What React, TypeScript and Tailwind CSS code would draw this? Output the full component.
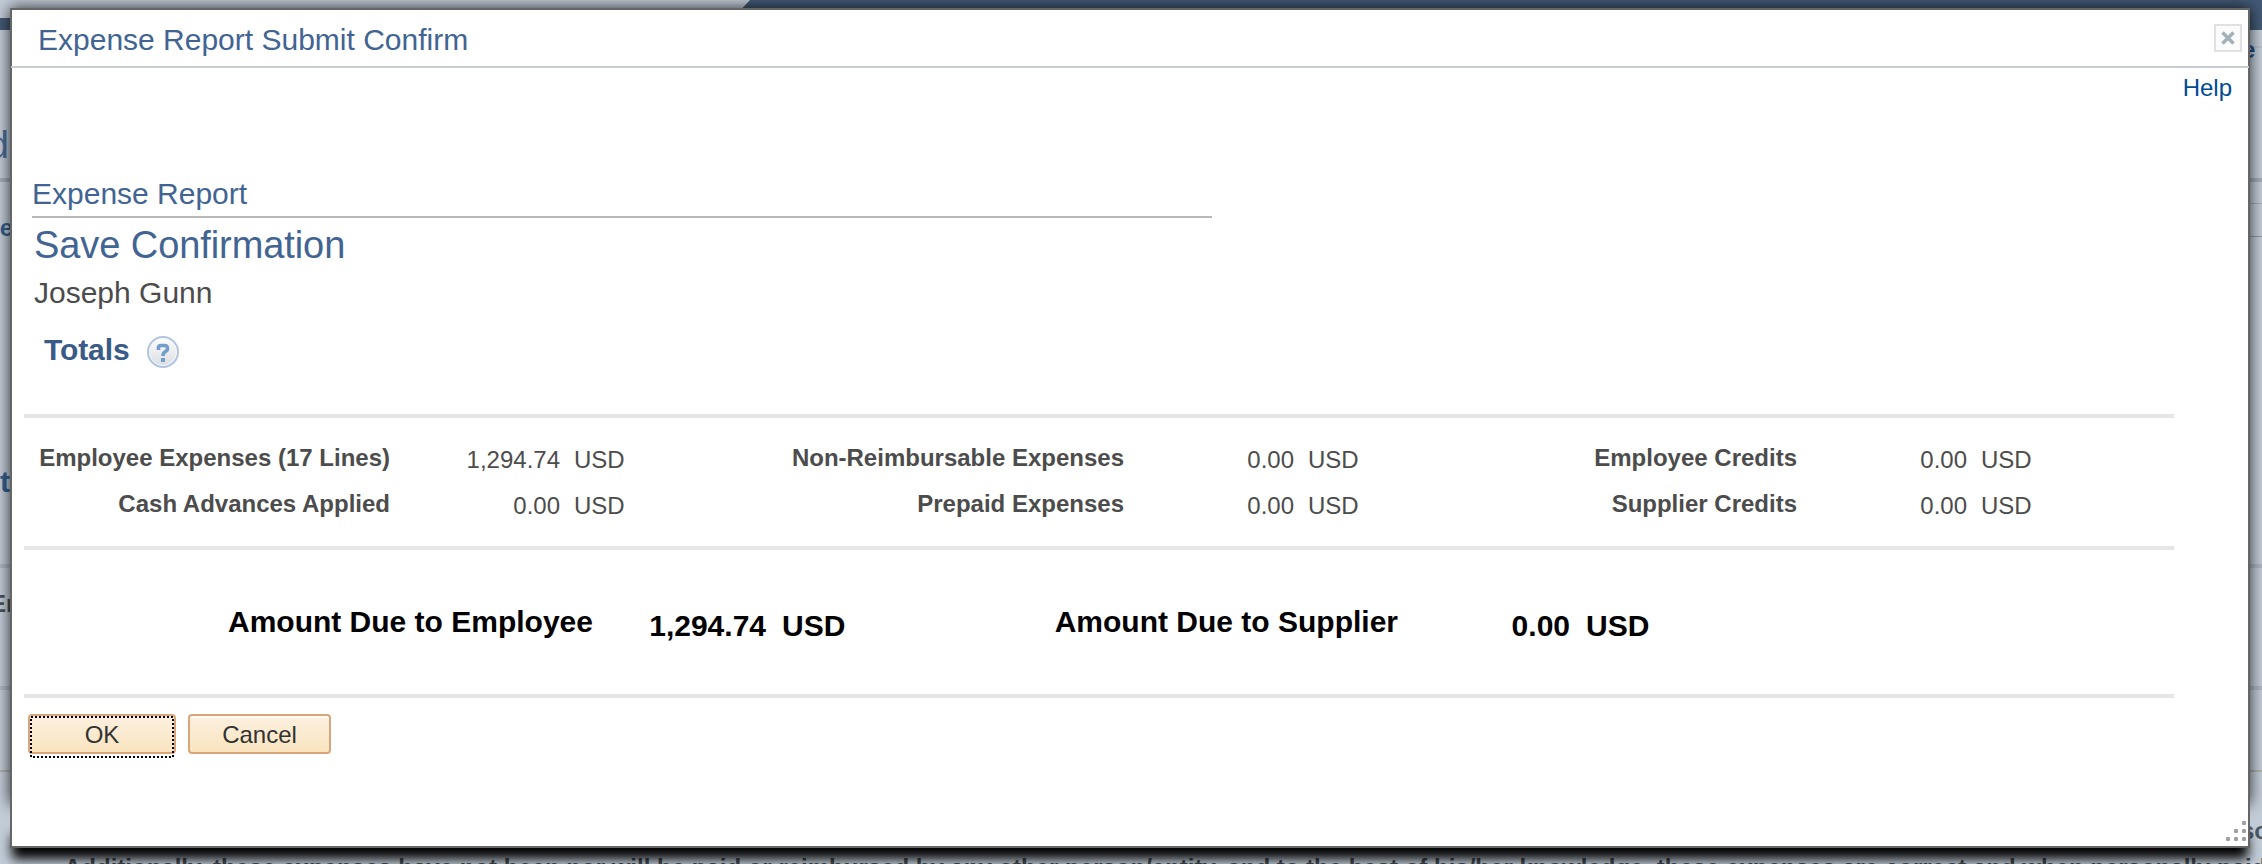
import React from "react";

type Item = { label: string; amount: string };

const rows: Item[][] = [
  [
    { label: "Employee Expenses (17 Lines)", amount: "1,294.74" },
    { label: "Non-Reimbursable Expenses", amount: "0.00" },
    { label: "Employee Credits", amount: "0.00" },
  ],
  [
    { label: "Cash Advances Applied", amount: "0.00" },
    { label: "Prepaid Expenses", amount: "0.00" },
    { label: "Supplier Credits", amount: "0.00" },
  ],
];

const labelWidths = ["w-[366px]", "w-[500px]", "w-[439px]"];

function Backdrop() {
  return (
    <div className="absolute inset-0 overflow-hidden bg-[#c2ccd7]">
      <svg className="absolute inset-0" width="2262" height="864">
        <rect x="0" y="18" width="740" height="12" fill="#435a76" />
        <path d="M750 0H2262V30H722Z" fill="#435a76" />
        <rect x="0" y="178" width="2262" height="4" fill="#a3adb7" />
        <rect x="2240" y="46" width="22" height="2" fill="#b4bec9" />
        <rect x="2240" y="203" width="22" height="1" fill="#a3adb7" />
        <rect x="2240" y="236" width="22" height="1" fill="#8d979f" />
        <rect x="0" y="564" width="2262" height="4" fill="#aeb8c2" />
        <rect x="0" y="686" width="2262" height="4" fill="#aeb8c2" />
        <rect x="0" y="770" width="2262" height="2" fill="#aeb1ac" />
      </svg>
      <span className="absolute top-[123px] right-[2253px] text-[38px] leading-[44px] text-[#4a6d98]">d</span>
      <span className="absolute top-[214px] right-[2249px] text-[24px] leading-[28px] font-bold text-[#34608f]">se</span>
      <span className="absolute top-[465px] right-[2252px] text-[30px] leading-[34px] font-bold text-[#34608f]">ot</span>
      <span className="absolute top-[590px] left-[-10px] text-[24px] leading-[28px] font-bold text-[#4a525b]">Em</span>
      <span className="absolute top-[36px] left-[2242px] text-[24px] leading-[28px] font-bold text-[#23508a]">e</span>
      <span className="absolute top-[817px] left-[2241px] text-[24px] leading-[28px] font-bold text-[#4c5964]">so</span>
      <span className="absolute top-[854px] left-[64px] text-[24px] leading-[28px] font-bold whitespace-nowrap text-[#454c54]">
        Additionally, these expenses have not been nor will be paid or reimbursed by any other person/entity, and to the best of his/her knowledge, these expenses are correct and when personally paid
      </span>
    </div>
  );
}

function HelpIcon() {
  return (
    <svg className="mt-[3px]" width="32" height="32" viewBox="0 0 32 32">
      <defs>
        <linearGradient id="help" x1="0" y1="0" x2="0" y2="1">
          <stop offset="0" stopColor="#fdfdfe" />
          <stop offset="1" stopColor="#d9dde1" />
        </linearGradient>
      </defs>
      <circle cx="16" cy="16" r="15" fill="url(#help)" stroke="#b0c4de" strokeWidth="2" />
      <circle cx="16" cy="16" r="13.500" fill="none" stroke="#f5f8fb" strokeWidth="1" />
      <path d="M11.500 14V11.500Q11.500 9.500 14 9.500H17.500Q20.500 9.500 20.500 12.500Q20.500 14.500 18.500 15.500Q16 16.800 16 20" fill="none" stroke="#759dcc" strokeWidth="3.600" />
      <rect x="14" y="22" width="4" height="4" fill="#759dcc" />
    </svg>
  );
}

export default function App() {
  return (
    <div className="relative h-[864px] w-[2262px] overflow-hidden font-['Liberation_Sans',Arial,sans-serif]">
      <Backdrop />
      <div className="absolute top-[8px] left-[10px] h-[840px] w-[2240px]">
        <div className="absolute inset-x-0 top-0 h-[796px] shadow-[0_0_14px_0_rgba(0,0,0,0.8)]" />
        <div className="absolute inset-x-[4px] bottom-0 h-[20px] shadow-[0_9px_12px_2px_#000]" />
        <main className="relative flex h-[840px] flex-col border-2 border-[#666] bg-white text-[24px] leading-[28px] text-[#4c4c4c]">
          <header className="-mx-px flex h-[58px] shrink-0 items-center justify-between border-b-2 border-[#c8cdd5] pr-[7px] pl-[27px]">
            <h1 className="pt-[3px] text-[30px] leading-[34px] text-[#426492]">Expense Report Submit Confirm</h1>
            <button className="flex size-[28px] items-center justify-center border-2 border-[#e1e1e1] bg-[#fbfbfb]">
              <svg width="14" height="14" viewBox="0 0 14 14">
                <path d="M1.500 1.500L12.500 12.500M12.500 1.500L1.500 12.500" stroke="#a1b0b9" strokeWidth="3.400" />
              </svg>
            </button>
          </header>
          <div className="flex justify-end pt-[6px] pr-[16px]">
            <a className="text-[#004b91]">Help</a>
          </div>
          <section className="pt-[75px] pl-[20px]">
            <h2 className="w-[1180px] border-b-2 border-[#b9b9b9] pb-[5px] text-[30px] leading-[34px] text-[#426492]">Expense Report</h2>
            <h3 className="pt-[5px] pl-[2px] text-[38px] leading-[44px] tracking-[-0.08px] text-[#426492]">Save Confirmation</h3>
            <p className="pt-[9px] pl-[2px] text-[30px] leading-[34px]">Joseph Gunn</p>
            <div className="flex items-start gap-[17px] pt-[23px] pl-[12px]">
              <h4 className="text-[30px] leading-[34px] font-bold tracking-[-0.1px] text-[#3a5a87]">Totals</h4>
              <HelpIcon />
            </div>
          </section>
          <section className="mt-[46px] ml-[12px] flex h-[136px] w-[2150px] shrink-0 flex-col gap-[16px] border-y-4 border-[#e6e6e6] pt-[26px]">
            {rows.map((row, r) => (
              <div key={r} className="flex">
                {row.map((item, c) => (
                  <React.Fragment key={item.label}>
                    <span className={`text-right font-bold ${labelWidths[c]}`}>{item.label}</span>
                    <span className="w-[170px] pt-[2px] text-right">{item.amount}</span>
                    <span className="w-[64px] pt-[2px] pl-[14px]">USD</span>
                  </React.Fragment>
                ))}
              </div>
            ))}
          </section>
          <section className="ml-[12px] flex h-[148px] w-[2150px] shrink-0 border-b-4 border-[#e6e6e6] pt-[55px] text-[30px] leading-[34px] font-bold text-black">
            <span className="w-[569px] text-right">Amount Due to Employee</span>
            <span className="w-[173px] pt-[4px] text-right">1,294.74</span>
            <span className="w-[79px] pt-[4px] pl-[16px]">USD</span>
            <span className="w-[553px] text-right">Amount Due to Supplier</span>
            <span className="w-[172px] pt-[4px] text-right">0.00</span>
            <span className="pt-[4px] pl-[16px]">USD</span>
          </section>
          <div className="flex gap-[12px] pt-[16px] pl-[16px] text-[#333]">
            <button className="relative h-[40px] w-[148px] rounded-[4px] border-2 border-[#d9a679] bg-linear-to-b from-[#fcf0e0] to-[#f9e4bf] pt-[2px]">
              OK
              <svg className="absolute top-0 left-0" width="144" height="42" viewBox="0 0 144 42">
                <rect x="1" y="1" width="142" height="40" fill="none" stroke="#000" strokeWidth="2" strokeDasharray="2 2" />
              </svg>
            </button>
            <button className="h-[40px] w-[143px] rounded-[4px] border-2 border-[#d9a679] bg-linear-to-b from-[#fcf0e0] to-[#f9e4bf] pt-[2px] shadow-[inset_0_2px_0_#fffaf3]">Cancel</button>
          </div>
          <svg className="absolute right-[1px] bottom-[4px]" width="22" height="22" viewBox="0 0 22 22" fill="#a0a0a0">
            <rect x="17" y="1" width="4" height="4" rx="1" />
            <rect x="9" y="9" width="4" height="4" rx="1" />
            <rect x="17" y="9" width="4" height="4" rx="1" />
            <rect x="1" y="17" width="4" height="4" rx="1" />
            <rect x="9" y="17" width="4" height="4" rx="1" />
            <rect x="17" y="17" width="4" height="4" rx="1" />
          </svg>
        </main>
      </div>
    </div>
  );
}
